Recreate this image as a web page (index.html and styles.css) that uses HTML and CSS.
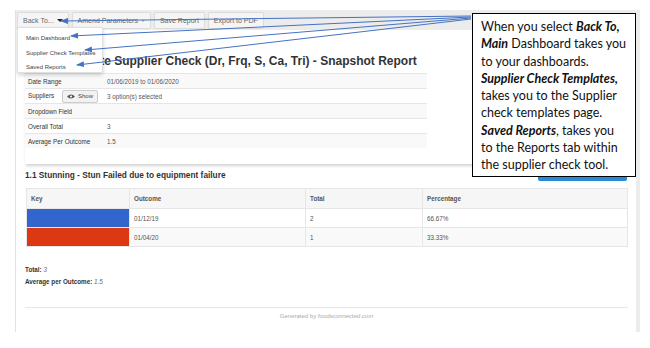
FILE: index.html
```html
<!DOCTYPE html>
<html>
<head>
  <meta charset="utf-8">
  <link rel="stylesheet" href="styles.css">
</head>
<body>
  <div class="app">
    <div class="page">
      <div class="toolbar">
        <button class="btn">Back To... <span class="caret dark"></span></button>
        <button class="btn">Amend Parameters <span class="caret"></span></button>
        <button class="btn">Save Report</button>
        <button class="btn">Export to PDF</button>

        <div class="menu">
          <div class="menu-item">Main Dashboard</div>
          <div class="menu-item">Supplier Check Templates</div>
          <div class="menu-item">Saved Reports</div>
        </div>
      </div>

      <div class="content">
        <div class="summary">
          <h1>Mock Template Supplier Check (Dr, Frq, S, Ca, Tri) - Snapshot Report</h1>
          <table class="info">
            <tr class="striped">
              <td class="label">Date Range</td>
              <td>01/06/2019 to 01/06/2020</td>
            </tr>
            <tr>
              <td class="label">
                Suppliers
                <span class="show-btn">
                  <svg width="8" height="5" viewBox="0 0 8 5"><path d="M0 2.5 Q4 -1.5 8 2.5 Q4 6.5 0 2.5 Z" fill="#555"/><circle cx="4" cy="2.5" r="1.1" fill="#f2f2f2"/></svg>
                  Show
                </span>
              </td>
              <td>3 option(s) selected</td>
            </tr>
            <tr class="striped">
              <td class="label">Dropdown Field</td>
              <td></td>
            </tr>
            <tr>
              <td class="label">Overall Total</td>
              <td>3</td>
            </tr>
            <tr class="striped">
              <td class="label">Average Per Outcome</td>
              <td>1.5</td>
            </tr>
          </table>
        </div>

        <div class="section-head">
          <h2>1.1 Stunning - Stun Failed due to equipment failure</h2>
          <span class="chart-btn"></span>
        </div>

        <table class="outcomes">
          <tr>
            <th class="col-key">Key</th>
            <th class="col-outcome">Outcome</th>
            <th class="col-total">Total</th>
            <th>Percentage</th>
          </tr>
          <tr>
            <td class="key"><div class="swatch blue"></div></td>
            <td>01/12/19</td>
            <td>2</td>
            <td>66.67%</td>
          </tr>
          <tr class="striped">
            <td class="key"><div class="swatch red"></div></td>
            <td>01/04/20</td>
            <td>1</td>
            <td>33.33%</td>
          </tr>
        </table>

        <div class="totals">
          <div><b>Total:</b> <i>3</i></div>
          <div><b>Average per Outcome:</b> <i>1.5</i></div>
        </div>

        <div class="footer">Generated by <i>foodsconnected.com</i></div>
      </div>
    </div>
    <div class="scrollbar"></div>
  </div>

  <div class="callout">
    When you select <b><i>Back To,</i></b><br>
    <b><i>Main</i></b> Dashboard takes you<br>
    to your dashboards.<br>
    <b><i>Supplier Check Templates,</i></b><br>
    takes you to the Supplier<br>
    check templates page.<br>
    <b><i>Saved Reports</i></b>, takes you<br>
    to the Reports tab within<br>
    the supplier check tool.
  </div>

  <svg class="arrows" width="650" height="348" viewBox="0 0 650 348">
    <defs>
      <marker id="head" markerWidth="8" markerHeight="6" refX="7" refY="3" orient="auto" markerUnits="userSpaceOnUse">
        <path d="M0 0 L8 3 L0 6 Z" fill="#4472c4"/>
      </marker>
    </defs>
    <g stroke="#4472c4" stroke-width="1" fill="none">
      <line x1="471" y1="16" x2="61" y2="21" marker-end="url(#head)"/>
      <line x1="471" y1="17" x2="71" y2="36" marker-end="url(#head)"/>
      <line x1="471" y1="18" x2="85" y2="50" marker-end="url(#head)"/>
      <line x1="471" y1="19" x2="77" y2="65" marker-end="url(#head)"/>
    </g>
  </svg>
</body>
</html>
```

FILE: styles.css
```css
body {
  margin: 0;
  background: white;
  font-family: "Liberation Sans", Arial, sans-serif;
  color: #333;
}

.app {
  display: flex;
  margin: 10px 0 0 15px;
  width: 625px;
  height: 322px;
}

.page {
  width: 621px;
  border-left: 1px solid #e2e2e2;
  box-sizing: border-box;
  overflow: hidden;
}

.scrollbar {
  width: 4px;
  background: #ececec;
}

.toolbar {
  position: relative;
  display: flex;
  gap: 3px;
  height: 20px;
  padding: 2px 0 0 1px;
  box-sizing: border-box;
  background: #ececec;
}

.btn {
  height: 17px;
  padding: 0 5px;
  border: 1px solid #dcdcdc;
  border-radius: 2px;
  background: #f5f5f5;
  font-family: "Liberation Sans", Arial, sans-serif;
  font-size: 7px;
  color: #666;
  display: flex;
  align-items: center;
  gap: 3px;
}

.caret {
  width: 0;
  height: 0;
  border-left: 2px solid transparent;
  border-right: 2px solid transparent;
  border-top: 2px solid #aaa;
}

.caret.dark {
  border-left-width: 3px;
  border-right-width: 3px;
  border-top: 3px solid #222;
}

.menu {
  position: absolute;
  left: 1px;
  top: 17px;
  width: 86px;
  height: 46px;
  padding-top: 3px;
  box-sizing: border-box;
  background: white;
  border: 1px solid #e0e0e0;
  border-radius: 2px;
  box-shadow: 0 2px 4px rgba(0,0,0,0.18);
  z-index: 2;
}

.menu-item {
  font-size: 6px;
  color: #444;
  padding-left: 8px;
  height: 14.5px;
  line-height: 14.5px;
  white-space: nowrap;
}

.content {
  padding-left: 9px;
}

.summary {
  padding-top: 24px;
  padding-bottom: 16px;
  box-shadow: 0 3px 3px -1px rgba(0,0,0,0.18);
}

.summary h1 {
  margin: 0 0 5px 0;
  font-size: 12px;
  line-height: 14px;
  font-weight: bold;
  color: #333;
  white-space: nowrap;
}

.info {
  width: 402px;
  border-collapse: collapse;
  font-size: 6.3px;
  color: #555;
}

.info td {
  height: 14px;
  padding: 0 3px;
  border-top: 1px solid #e6e6e6;
  white-space: nowrap;
}

.info .label {
  width: 73px;
  color: #333;
}

.striped td {
  background: #f9f9f9;
}

.show-btn {
  display: inline-flex;
  align-items: center;
  gap: 3px;
  margin-left: 6px;
  height: 11px;
  padding: 0 4px;
  border: 1px solid #ccc;
  border-radius: 2px;
  background: #f2f2f2;
  vertical-align: middle;
  font-size: 6px;
  color: #444;
}

.section-head {
  display: flex;
  justify-content: space-between;
  align-items: flex-start;
  margin-top: 6px;
  padding-right: 9px;
}

.section-head h2 {
  margin: 0;
  font-size: 8.3px;
  line-height: 10px;
  font-weight: bold;
  color: #333;
}

.chart-btn {
  width: 89px;
  height: 9px;
  margin-top: 2px;
  background: #2a8ad6;
  border-radius: 2px;
}

.outcomes {
  width: 602px;
  margin: 7px 0 0 1px;
  border-collapse: collapse;
  font-size: 6.3px;
  color: #555;
}

.outcomes th,
.outcomes td {
  height: 18px;
  padding: 0 4px;
  border: 1px solid #e6e6e6;
  text-align: left;
}

.outcomes th {
  height: 19px;
  background: #f6f6f6;
  font-weight: 600;
  color: #555;
}

.col-key { width: 94px; }
.col-outcome { width: 167px; }
.col-total { width: 108px; }

.outcomes .key {
  padding: 0;
}

.swatch {
  height: 18px;
}

.swatch.blue { background: #3366cc; }
.swatch.red { background: #dc3912; }

.totals {
  margin-top: 17px;
  font-size: 6.3px;
  line-height: 12px;
  color: #333;
}

.totals i {
  color: #666;
}

.footer {
  margin: 19px 8px 0 0;
  border-top: 1px solid #e6e6e6;
  padding-top: 3px;
  text-align: center;
  font-size: 6px;
  line-height: 10px;
  color: #aaa;
}

.callout {
  position: absolute;
  left: 472px;
  top: 13px;
  width: 164px;
  height: 164px;
  box-sizing: border-box;
  padding: 4px 0 0 8px;
  border: 1px solid #000;
  background: white;
  font-family: Lato, "Open Sans", sans-serif;
  font-size: 12.5px;
  line-height: 17.3px;
  color: #111;
  white-space: nowrap;
  z-index: 3;
}

.arrows {
  position: absolute;
  left: 0;
  top: 0;
  pointer-events: none;
  z-index: 4;
}
```
